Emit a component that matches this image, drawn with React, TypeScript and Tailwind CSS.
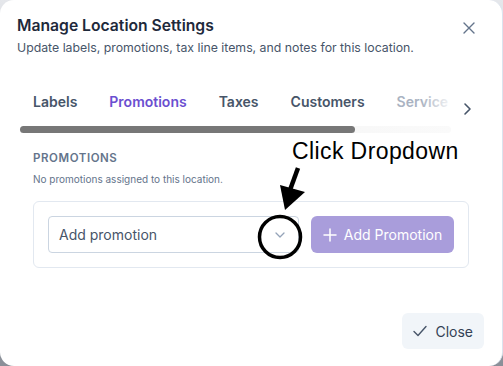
import React from "react";

export default function App() {
  return (
    <div className="w-[503px] h-[366px] bg-gradient-to-b from-[#e5e7eb] to-[#8a8f98] overflow-hidden" style={{ fontFamily: "Inter, 'Noto Sans', sans-serif" }}>
      <div className="relative w-full h-full bg-white rounded-[14px] flex flex-col border-r border-[#dbe3ee]">
        {/* Header */}
        <div className="px-[17px] pt-[15px]">
          <h2 className="text-[15.7px] leading-[22px] font-semibold text-[#1e293b]">Manage Location Settings</h2>
          <p className="mt-[2px] text-[12.3px] leading-[18px] text-[#475569]">Update labels, promotions, tax line items, and notes for this location.</p>
        </div>
        <button className="absolute right-[27px] top-[22px] text-[#64748b]">
          <svg width="12" height="12" viewBox="0 0 12 12" fill="none" stroke="currentColor" strokeWidth="1.4" strokeLinecap="round">
            <path d="M1 1L11 11M11 1L1 11" />
          </svg>
        </button>

        {/* Tabs */}
        <div className="mt-[32px] flex items-start pl-[20px] pr-[30px]">
          <div className="flex-1 flex flex-col">
            <div className="relative flex items-center h-[24px] gap-[32px] pl-[13px] text-[14px] font-semibold text-[#475569] whitespace-nowrap overflow-hidden">
              <span>Labels</span>
              <span className="text-[#6b4fd0]">Promotions</span>
              <span>Taxes</span>
              <span>Customers</span>
              <span className="text-[#aab3c2]">Service</span>
              <div className="absolute right-0 top-0 h-full w-[30px] bg-gradient-to-r from-white/0 to-white/90"></div>
            </div>
            <div className="mt-[13px] h-[7px] rounded-full bg-gradient-to-r from-[#f0f0f0] to-[#fafafa] flex">
              <div className="w-[335px] h-full rounded-full bg-[#777777]"></div>
            </div>
          </div>
          <div className="ml-[11px] mt-[13px] text-[#475569]">
            <svg width="10" height="14" viewBox="0 0 10 14" fill="none" stroke="currentColor" strokeWidth="1.6" strokeLinecap="round" strokeLinejoin="round">
              <path d="M3 2L8 7L3 12" />
            </svg>
          </div>
        </div>

        {/* Content */}
        <div className="px-[33px] mt-[17px]">
          <div className="text-[11.5px] leading-[16px] font-semibold tracking-[0.05em] text-[#64748b]">PROMOTIONS</div>
          <div className="mt-[6px] text-[10px] leading-[14px] text-[#64748b]">No promotions assigned to this location.</div>
          <div className="mt-[15px] border border-[#e2e8f0] rounded-[6px] h-[67px] flex items-center px-[14px] gap-[12px]">
            <div className="w-[251px] h-[37px] border border-[#cbd5e1] rounded-[4px] flex items-center justify-between pl-[10px] pr-[12px]">
              <span className="text-[14px] text-[#475569]">Add promotion</span>
              <svg width="12" height="8" viewBox="0 0 12 8" fill="none" stroke="#94a3b8" strokeWidth="1.3" strokeLinecap="round" strokeLinejoin="round">
                <path d="M2 2L6 6L10 2" />
              </svg>
            </div>
            <button className="w-[143px] h-[37px] rounded-[6px] bg-[#a99ddb] text-white text-[14px] flex items-center justify-center gap-[7px]">
              <svg width="14" height="14" viewBox="0 0 14 14" fill="none" stroke="white" strokeWidth="1.5" strokeLinecap="round">
                <path d="M7 1V13M1 7H13" />
              </svg>
              <span>Add Promotion</span>
            </button>
          </div>
        </div>

        {/* Footer */}
        <div className="mt-auto mb-[17px] flex justify-end pr-[18px]">
          <button className="h-[36px] px-[11px] rounded-[6px] bg-[#f1f5f9] text-[#334155] text-[14px] flex items-center gap-[8px]">
            <svg width="14" height="12" viewBox="0 0 14 12" fill="none" stroke="#475569" strokeWidth="1.4" strokeLinecap="round" strokeLinejoin="round">
              <path d="M1 6.5L5 10.5L13 1.5" />
            </svg>
            <span>Close</span>
          </button>
        </div>

        {/* Annotation overlay */}
        <div className="absolute left-[292px] top-[138px] text-[23px] leading-[26px] tracking-[0.4px] text-black" style={{ fontFamily: "'Liberation Sans', Arial, sans-serif" }}>
          Click Dropdown
        </div>
        <svg className="absolute left-0 top-0 pointer-events-none" width="503" height="366" viewBox="0 0 503 366">
          <path d="M298 168 L290 190" stroke="black" strokeWidth="4.5" strokeLinecap="butt" />
          <path d="M280 185 L305 192 L285 210 Z" fill="black" />
          <circle cx="280" cy="237" r="20.5" fill="none" stroke="black" strokeWidth="3.5" />
        </svg>
      </div>
    </div>
  );
}
